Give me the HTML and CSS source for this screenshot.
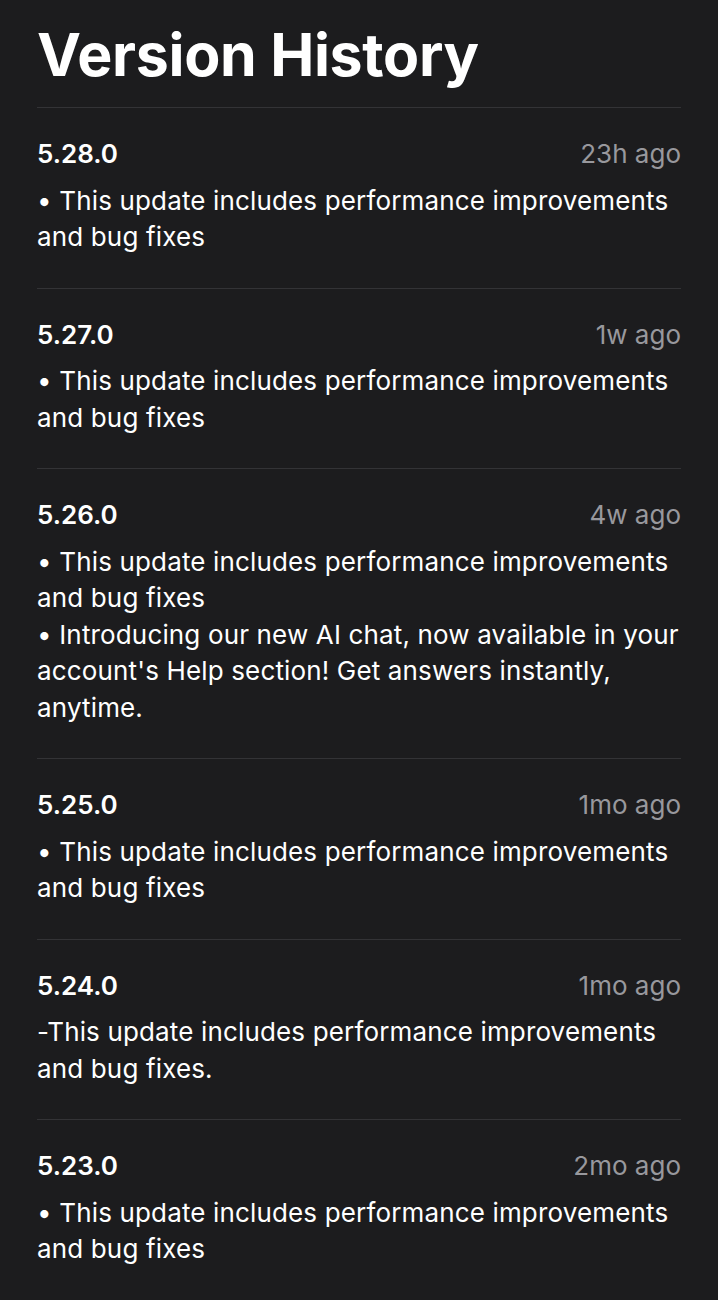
FILE: index.html
```html
<!DOCTYPE html>
<html>
<head>
<meta charset="utf-8" />
<title>Version History</title>
<link rel="stylesheet" href="styles.css">
</head>
<body>
<div class="page">
  <h1>Version History</h1>
  <div class="release">
    <div class="head"><span class="version">5.28.0</span><span class="date">23h ago</span></div>
    <p class="notes">• This update includes performance improvements and bug fixes</p>
  </div>
  <div class="release">
    <div class="head"><span class="version">5.27.0</span><span class="date">1w ago</span></div>
    <p class="notes">• This update includes performance improvements and bug fixes</p>
  </div>
  <div class="release">
    <div class="head"><span class="version">5.26.0</span><span class="date">4w ago</span></div>
    <p class="notes">• This update includes performance improvements and bug fixes</p>
    <p class="notes">• Introducing our new AI chat, now available in your account's Help section! Get answers instantly, anytime.</p>
  </div>
  <div class="release">
    <div class="head"><span class="version">5.25.0</span><span class="date">1mo ago</span></div>
    <p class="notes">• This update includes performance improvements and bug fixes</p>
  </div>
  <div class="release">
    <div class="head"><span class="version">5.24.0</span><span class="date">1mo ago</span></div>
    <p class="notes">-This update includes performance improvements and bug fixes.</p>
  </div>
  <div class="release">
    <div class="head"><span class="version">5.23.0</span><span class="date">2mo ago</span></div>
    <p class="notes">• This update includes performance improvements and bug fixes</p>
  </div>
</div>
</body>
</html>
```

FILE: styles.css
```css
* {
  box-sizing: border-box;
}
body {
  margin: 0;
  background-color: #1c1c1e;
  color: #fff;
  font-family: Inter, 'Noto Sans', sans-serif;
}
.page {
  padding: 0 37px;
}
h1 {
  margin: 0;
  padding: 25px 0 23px;
  font-size: 59px;
  line-height: 59px;
  font-weight: 700;
  letter-spacing: -0.3px;
}
.release {
  border-top: 1px solid #333336;
  padding: 28px 0 32px;
}
.head {
  display: flex;
  justify-content: space-between;
  align-items: baseline;
  line-height: 36.5px;
  margin-bottom: 10px;
}
.version {
  font-size: 26px;
  font-weight: 600;
}
.date {
  font-size: 26px;
  color: #98989d;
}
.notes {
  margin: 0;
  font-size: 26px;
  line-height: 36.5px;
  letter-spacing: 0.15px;
}
```
